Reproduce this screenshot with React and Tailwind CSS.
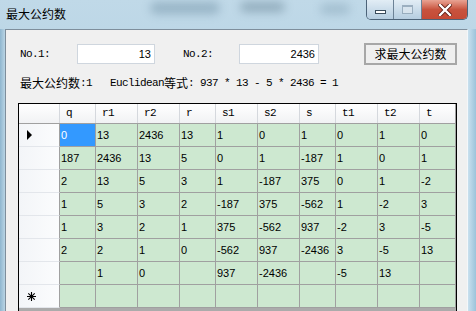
const cols = [
  { key: 'q', w: 'w-[36px]' },
  { key: 'r1', w: 'w-[42px]' },
  { key: 'r2', w: 'w-[42px]' },
  { key: 'r', w: 'w-[36px]' },
  { key: 's1', w: 'w-[42px]' },
  { key: 's2', w: 'w-[42px]' },
  { key: 's', w: 'w-[36px]' },
  { key: 't1', w: 'w-[42px]' },
  { key: 't2', w: 'w-[42px]' },
  { key: 't', w: 'w-[36px]' },
];

const rows = [
  ['0', '13', '2436', '13', '1', '0', '1', '0', '1', '0'],
  ['187', '2436', '13', '5', '0', '1', '-187', '1', '0', '1'],
  ['2', '13', '5', '3', '1', '-187', '375', '0', '1', '-2'],
  ['1', '5', '3', '2', '-187', '375', '-562', '1', '-2', '3'],
  ['1', '3', '2', '1', '375', '-562', '937', '-2', '3', '-5'],
  ['2', '2', '1', '0', '-562', '937', '-2436', '3', '-5', '13'],
  ['', '1', '0', '', '937', '-2436', '', '-5', '13', ''],
  ['', '', '', '', '', '', '', '', '', ''],
];

const cjk = "font-['Noto_Sans_CJK_SC',sans-serif]";

const Cjk = ({ children }) => (
  <span className={`${cjk} text-[12px] tracking-normal`}>{children}</span>
);

const TitleBar = () => (
  <div className="relative flex h-[29px] justify-between">
    <div className="absolute left-[150px] top-[2px] h-[12px] w-[70px] rounded-full bg-[#5d7f95] opacity-40 blur-[5px]" />
    <div className="absolute left-[240px] top-[2px] h-[10px] w-[45px] rounded-full bg-[#4d6a7c] opacity-40 blur-[5px]" />
    <div className="absolute left-[320px] top-[4px] h-[10px] w-[30px] rounded-full bg-[#5d7f95] opacity-30 blur-[5px]" />
    <div className={`relative pl-[6px] pt-[6px] text-[12px] leading-[16px] text-black ${cjk}`}>最大公约数</div>
    <div className="relative mr-[8px] flex h-[20px] overflow-hidden rounded-b-[5px] border border-t-0 border-[#4c6378]">
      <div className="flex w-[27px] items-center justify-center border-r border-[#6c8296] bg-gradient-to-b from-[#e2edf5] to-[#b5cde0]">
        <div className="mt-[4px] h-[4px] w-[11px] border border-[#3a4c5c] bg-white" />
      </div>
      <div className="flex w-[28px] items-center justify-center border-r border-[#6c8296] bg-gradient-to-b from-[#e2edf5] to-[#b5cde0]">
        <div className="h-[9px] w-[11px] border border-[#8ea3b5] border-t-2 bg-[#dbe6ef] opacity-80" />
      </div>
      <div className="flex w-[45px] items-center justify-center bg-gradient-to-b from-[#e8a393] via-[#c8533e] to-[#c44a35]">
        <svg width="14" height="12" viewBox="0 0 14 12">
          <path d="M2 1 L12 11 M12 1 L2 11" stroke="#5a1a10" strokeWidth="4" strokeLinecap="square" />
          <path d="M2 1 L12 11 M12 1 L2 11" stroke="white" strokeWidth="2.4" strokeLinecap="square" />
        </svg>
      </div>
    </div>
  </div>
);

const Grid = () => (
  <div className="ml-[12px] mt-[12px] h-[220px] w-[439px] border border-black bg-[#ababab] font-['Liberation_Sans',sans-serif] text-[11px]">
    <div className="flex h-[20px] border-b border-[#a0a0a0] bg-gradient-to-b from-white to-[#f1f2f4]">
      <div className="w-[41px] border-r border-[#d5d8dd]" />
      {cols.map((c, i) => (
        <div
          key={c.key}
          className={`${c.w} flex items-center pl-[6px] font-['Liberation_Mono',monospace] text-[11px] tracking-[-0.6px] ${i === cols.length - 1 ? 'border-r border-[#a0a0a0]' : 'border-r border-[#d5d8dd]'}`}
        >
          {c.key}
        </div>
      ))}
    </div>
    {rows.map((r, ri) => (
      <div key={ri} className="flex h-[23px]">
        <div className="flex w-[41px] items-center border-b border-r border-[#e3e6eb] border-r-[#a0a0a0] bg-gradient-to-r from-[#f3f5f8] to-[#fbfcfd] pl-[8px]">
          {ri === 0 && (
            <svg width="6" height="10" viewBox="0 0 6 10">
              <path d="M0 0 L5 5 L0 10 Z" fill="black" />
            </svg>
          )}
          {ri === rows.length - 1 && (
            <svg width="9" height="9" viewBox="0 0 9 9">
              <path d="M4.5 0 V9 M0 4.5 H9 M1.3 1.3 L7.7 7.7 M7.7 1.3 L1.3 7.7" stroke="black" strokeWidth="1.1" />
            </svg>
          )}
        </div>
        {cols.map((c, ci) => {
          const sel = ri === 0 && ci === 0;
          return (
            <div
              key={c.key}
              className={`${c.w} flex items-center border-b border-r border-[#a0a0a0] pl-[1px] ${sel ? 'bg-[#3399ff] text-white' : 'bg-[#cde8d0] text-black'}`}
            >
              {r[ci]}
            </div>
          );
        })}
      </div>
    ))}
  </div>
);

export default function App() {
  return (
    <div className="relative h-[311px] w-[476px] overflow-hidden bg-gradient-to-b from-[#c0d9e8] to-[#9fc5dc] font-['Liberation_Mono',monospace]">
      <TitleBar />
      <div className="flex h-[282px]">
        <div className="w-[5px] bg-gradient-to-r from-[#8fb6cf] to-[#b9d4e4]" />
        <div className="w-[463px] border-l border-r border-t border-[#7e8e9c] border-r-[#f4f7fa] bg-[#f0f0f0]">
          <div className="ml-[14px] mt-[13px] flex h-[22px] items-center text-[11px] tracking-[-0.6px] text-black">
            <div className="w-[57px]">No.1:</div>
            <div className="flex h-[20px] w-[78px] items-center justify-end border border-[#cfd6de] bg-white pr-[3px] font-['Liberation_Sans',sans-serif] tracking-normal">13</div>
            <div className="w-[28px]" />
            <div className="w-[56px]">No.2:</div>
            <div className="flex h-[20px] w-[80px] items-center justify-end border border-[#cfd6de] bg-white pr-[3px] font-['Liberation_Sans',sans-serif] tracking-normal">2436</div>
            <div className="w-[45px]" />
            <button className={`flex h-[22px] w-[93px] items-center justify-center border-2 border-[#a7a7a7] bg-[#efefef] text-[12px] tracking-normal text-black ${cjk}`}>
              求最大公约数
            </button>
          </div>
          <div className="ml-[14px] mt-[10px] flex h-[16px] items-center whitespace-pre text-[11px] tracking-[-0.6px] text-black">
            <Cjk>最大公约数</Cjk>
            <span>:1   Euclidean</span>
            <Cjk>等式</Cjk>
            <span>: 937 * 13 - 5 * 2436 = 1</span>
          </div>
          <Grid />
        </div>
        <div className="w-[8px] bg-gradient-to-r from-[#c9e0ee] to-[#9cc3da]" />
      </div>
    </div>
  );
}
